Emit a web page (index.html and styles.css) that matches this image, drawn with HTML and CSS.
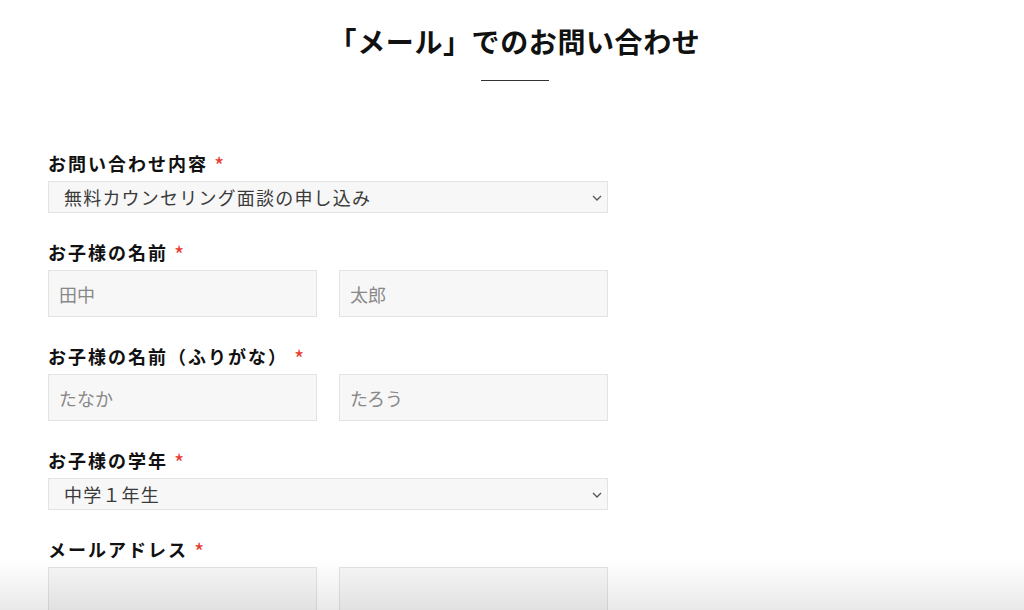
FILE: index.html
```html
<!DOCTYPE html>
<html lang="ja">
<head>
<meta charset="utf-8">
<title>メールでのお問い合わせ</title>
<link rel="stylesheet" href="styles.css">
</head>
<body>
<header class="head">
  <h1 class="title">「メール」でのお問い合わせ</h1>
  <div class="rule"></div>
</header>
<form class="form">
  <div class="group">
    <label class="label">お問い合わせ内容<span class="req">*</span></label>
    <div class="select">
      <span class="select-text">無料カウンセリング面談の申し込み</span>
      <svg class="chev" width="10" height="6" viewBox="0 0 10 6"><path d="M1 1 L5 5 L9 1" fill="none" stroke="#555" stroke-width="1.3"/></svg>
    </div>
  </div>
  <div class="group">
    <label class="label">お子様の名前<span class="req">*</span></label>
    <div class="pair">
      <input class="input" type="text" placeholder="田中">
      <input class="input" type="text" placeholder="太郎">
    </div>
  </div>
  <div class="group">
    <label class="label">お子様の名前（ふりがな）<span class="req">*</span></label>
    <div class="pair">
      <input class="input" type="text" placeholder="たなか">
      <input class="input" type="text" placeholder="たろう">
    </div>
  </div>
  <div class="group">
    <label class="label">お子様の学年<span class="req">*</span></label>
    <div class="select">
      <span class="select-text">中学１年生</span>
      <svg class="chev" width="10" height="6" viewBox="0 0 10 6"><path d="M1 1 L5 5 L9 1" fill="none" stroke="#555" stroke-width="1.3"/></svg>
    </div>
  </div>
  <div class="group">
    <label class="label">メールアドレス<span class="req">*</span></label>
    <div class="pair">
      <input class="input" type="text">
      <input class="input" type="text">
    </div>
  </div>
</form>
<div class="fade"></div>
</body>
</html>
```
FILE: styles.css
```css
html, body {
  margin: 0;
  padding: 0;
  background: #fff;
}
body {
  font-family: "Noto Sans CJK JP", "Noto Sans", sans-serif;
  color: #111;
  overflow: hidden;
  height: 610px;
}
.head {
  display: flex;
  flex-direction: column;
  align-items: center;
  padding-top: 20px;
  padding-left: 5px;
}
.title {
  margin: 0;
  font-size: 28px;
  line-height: 42px;
  font-weight: 700;
  letter-spacing: 0.6px;
  color: #111;
}
.rule {
  width: 68px;
  height: 1px;
  background: #333;
  margin-top: 18px;
}
.form {
  width: 560px;
  margin: 70px 0 0 48px;
}
.group {
  margin-bottom: 27px;
}
.label {
  display: block;
  font-size: 18px;
  line-height: 24px;
  font-weight: 700;
  letter-spacing: 2px;
  margin-bottom: 6px;
  color: #111;
}
.req {
  color: #e8392f;
  font-weight: 400;
  font-size: 22px;
  line-height: 0;
  margin-left: 6px;
  position: relative;
  top: 3px;
}
.select {
  position: relative;
  box-sizing: border-box;
  height: 32px;
  border: 1px solid #e3e3e3;
  background: #f7f7f7;
  display: flex;
  align-items: center;
  padding-left: 15px;
}
.select-text {
  font-size: 18px;
  letter-spacing: 1.2px;
  color: #3a3a3a;
  line-height: 30px;
}
.chev {
  position: absolute;
  right: 5px;
  top: 13px;
}
.pair {
  display: grid;
  grid-template-columns: 1fr 1fr;
  gap: 22px;
}
.input {
  box-sizing: border-box;
  height: 47px;
  width: 100%;
  margin: 0;
  border: 1px solid #e3e3e3;
  background: #f7f7f7;
  padding: 0 10px;
  font-family: "Noto Sans CJK JP", "Noto Sans", sans-serif;
  font-size: 18px;
  color: #333;
  outline: none;
}
.input::placeholder {
  color: #888;
}
.fade {
  position: fixed;
  left: 0;
  right: 0;
  bottom: 0;
  height: 50px;
  background: linear-gradient(to bottom, rgba(0,0,0,0), rgba(0,0,0,0.085));
  pointer-events: none;
}
```
